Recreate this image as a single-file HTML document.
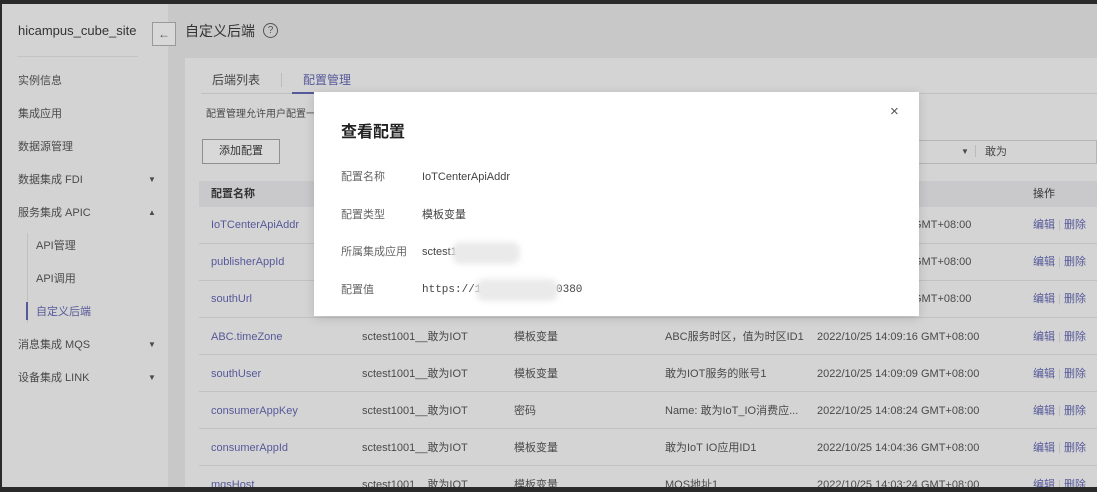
<!DOCTYPE html>
<html><head><meta charset="utf-8"><style>
*{margin:0;padding:0;box-sizing:border-box}
body{width:1097px;height:491px;overflow:hidden;background:#2a2a2a;font-family:"Liberation Sans","Noto Sans CJK SC",sans-serif;font-size:11px;line-height:14px;color:#4a4a4a;position:relative}
.abs{position:absolute;white-space:nowrap;line-height:14px}
#side{position:absolute;left:2px;top:4px;width:166px;height:483px;background:#d3d3d3}
#main{position:absolute;left:168px;top:4px;width:929px;height:483px;background:#c8c8c8}
#card{position:absolute;left:185px;top:58px;width:912px;height:429px;background:#d4d4d4}
.link{color:#56599a}
.row{position:absolute;left:199px;width:898px;border-bottom:1px solid #c2c2c2;height:37px}
#modal{position:absolute;left:314px;top:92px;width:605px;height:224px;background:#fff;box-shadow:0 2px 10px rgba(0,0,0,.15)}
.lbl{color:#666;font-size:11px}
.val{color:#444;font-size:11px}
.blur{position:absolute;background:#eaeaea;border-radius:8px;filter:blur(3px)}
</style></head><body>
<div id="side">
<div class="abs" style="left:16px;top:20px;font-size:13px;color:#333">hicampus_cube_site</div>
<div class="abs" style="left:15px;top:52px;width:121px;height:1px;background:#c4c4c4"></div>
<div class="abs" style="left:16px;top:70px">实例信息</div>
<div class="abs" style="left:16px;top:103px">集成应用</div>
<div class="abs" style="left:16px;top:136px">数据源管理</div>
<div class="abs" style="left:16px;top:169px">数据集成 FDI</div><div class="abs" style="left:146px;top:169px;font-size:8px">▼</div>
<div class="abs" style="left:16px;top:202px">服务集成 APIC</div><div class="abs" style="left:146px;top:202px;font-size:8px">▲</div>
<div class="abs" style="left:25px;top:229px;width:1px;height:90px;background:#c0c0c0"></div>
<div class="abs" style="left:34px;top:235px">API管理</div>
<div class="abs" style="left:34px;top:268px">API调用</div>
<div class="abs" style="left:24px;top:298px;width:2px;height:18px;background:#55599a"></div>
<div class="abs link" style="left:34px;top:301px">自定义后端</div>
<div class="abs" style="left:16px;top:334px">消息集成 MQS</div><div class="abs" style="left:146px;top:334px;font-size:8px">▼</div>
<div class="abs" style="left:16px;top:367px">设备集成 LINK</div><div class="abs" style="left:146px;top:367px;font-size:8px">▼</div>
</div>
<div id="main">
<div class="abs" style="left:-16px;top:18px;width:24px;height:24px;border:1px solid #999;background:#d8d8d8;text-align:center;line-height:22px;font-size:12px;color:#555">←</div>
<div class="abs" style="left:17px;top:19px;font-size:14px;line-height:16px;color:#333">自定义后端</div>
<div class="abs" style="left:95px;top:19px;width:15px;height:15px;border:1px solid #555;border-radius:50%;text-align:center;font-size:10px;line-height:13px;color:#555">?</div>
</div>
<div id="card">
<div class="abs" style="left:27px;top:15px;font-size:12px;color:#444">后端列表</div>
<div class="abs" style="left:96px;top:15px;width:1px;height:14px;background:#bbb"></div>
<div class="abs link" style="left:118px;top:15px;font-size:12px">配置管理</div>
<div class="abs" style="left:16px;top:35px;width:896px;height:1px;background:#c0c0c0"></div>
<div class="abs" style="left:107px;top:34px;width:60px;height:2px;background:#56599a"></div>
<div class="abs" style="left:21px;top:50px;font-size:10px">配置管理允许用户配置一</div>
<div class="abs" style="left:17px;top:81px;width:78px;height:25px;border:1px solid #8f8f8f;background:#d8d8d8;text-align:center;line-height:23px;color:#333">添加配置</div>
<div class="abs" style="left:700px;top:82px;width:212px;height:24px;border:1px solid #b5b5b5;background:#d4d4d4"></div>
<div class="abs" style="left:776px;top:87px;font-size:8px">▼</div>
<div class="abs" style="left:790px;top:87px;width:1px;height:12px;background:#bbb"></div>
<div class="abs" style="left:800px;top:87px">敢为</div>
</div>
<div class="row" style="top:181px;height:26px;background:#c9c9cc;border:none"></div>
<div class="abs" style="left:211px;top:187px;font-weight:bold;color:#333">配置名称</div>
<div class="abs" style="left:1033px;top:187px;color:#333">操作</div>
<div class="row" style="top:207px"></div><div class="row" style="top:244px"></div><div class="row" style="top:281px"></div>
<div class="row" style="top:318px"></div><div class="row" style="top:355px"></div><div class="row" style="top:392px"></div><div class="row" style="top:429px"></div>
<div class="abs link" style="left:211px;top:218px">IoTCenterApiAddr</div>
<div class="abs link" style="left:211px;top:255px">publisherAppId</div>
<div class="abs link" style="left:211px;top:292px">southUrl</div>
<div class="abs" style="left:913px;top:218px">GMT+08:00</div>
<div class="abs" style="left:913px;top:255px">GMT+08:00</div>
<div class="abs" style="left:913px;top:292px">GMT+08:00</div>
<div class="abs link" style="left:1033px;top:218px">编辑 <span style="color:#bbb">|</span> 删除</div>
<div class="abs link" style="left:1033px;top:255px">编辑 <span style="color:#bbb">|</span> 删除</div>
<div class="abs link" style="left:1033px;top:292px">编辑 <span style="color:#bbb">|</span> 删除</div>

<div class="abs link" style="left:211px;top:330px">ABC.timeZone</div><div class="abs" style="left:362px;top:330px">sctest1001__敢为IOT</div><div class="abs" style="left:514px;top:330px">模板变量</div><div class="abs" style="left:665px;top:330px">ABC服务时区，值为时区ID1</div><div class="abs" style="left:817px;top:330px">2022/10/25 14:09:16 GMT+08:00</div><div class="abs link" style="left:1033px;top:330px">编辑 <span style="color:#bbb">|</span> 删除</div>
<div class="abs link" style="left:211px;top:367px">southUser</div><div class="abs" style="left:362px;top:367px">sctest1001__敢为IOT</div><div class="abs" style="left:514px;top:367px">模板变量</div><div class="abs" style="left:665px;top:367px">敢为IOT服务的账号1</div><div class="abs" style="left:817px;top:367px">2022/10/25 14:09:09 GMT+08:00</div><div class="abs link" style="left:1033px;top:367px">编辑 <span style="color:#bbb">|</span> 删除</div>
<div class="abs link" style="left:211px;top:404px">consumerAppKey</div><div class="abs" style="left:362px;top:404px">sctest1001__敢为IOT</div><div class="abs" style="left:514px;top:404px">密码</div><div class="abs" style="left:665px;top:404px">Name: 敢为IoT_IO消费应...</div><div class="abs" style="left:817px;top:404px">2022/10/25 14:08:24 GMT+08:00</div><div class="abs link" style="left:1033px;top:404px">编辑 <span style="color:#bbb">|</span> 删除</div>
<div class="abs link" style="left:211px;top:441px">consumerAppId</div><div class="abs" style="left:362px;top:441px">sctest1001__敢为IOT</div><div class="abs" style="left:514px;top:441px">模板变量</div><div class="abs" style="left:665px;top:441px">敢为IoT IO应用ID1</div><div class="abs" style="left:817px;top:441px">2022/10/25 14:04:36 GMT+08:00</div><div class="abs link" style="left:1033px;top:441px">编辑 <span style="color:#bbb">|</span> 删除</div>
<div class="abs link" style="left:211px;top:478px">mqsHost</div><div class="abs" style="left:362px;top:478px">sctest1001__敢为IOT</div><div class="abs" style="left:514px;top:478px">模板变量</div><div class="abs" style="left:665px;top:478px">MQS地址1</div><div class="abs" style="left:817px;top:478px">2022/10/25 14:03:24 GMT+08:00</div><div class="abs link" style="left:1033px;top:478px">编辑 <span style="color:#bbb">|</span> 删除</div>
<div class="abs" style="left:0;top:487px;width:1097px;height:4px;background:#2a2a2a"></div>

<div id="modal">
<div class="abs" style="left:27px;top:32px;font-size:16px;line-height:18px;font-weight:bold;color:#222">查看配置</div>
<div class="abs" style="left:576px;top:12px;font-size:15px;line-height:16px;color:#555">×</div>
<div class="abs lbl" style="left:27px;top:78px">配置名称</div><div class="abs val" style="left:108px;top:78px">IoTCenterApiAddr</div>
<div class="abs lbl" style="left:27px;top:116px">配置类型</div><div class="abs val" style="left:108px;top:116px">模板变量</div>
<div class="abs lbl" style="left:27px;top:153px">所属集成应用</div><div class="abs val" style="left:108px;top:153px">sctest1</div>
<div class="blur" style="left:138px;top:150px;width:68px;height:22px"></div>
<div class="abs lbl" style="left:27px;top:191px">配置值</div><div class="abs val" style="left:108px;top:191px;font-family:'Liberation Mono',monospace">https://1</div>
<div class="abs val" style="left:242px;top:191px;font-family:'Liberation Mono',monospace">0380</div>
<div class="blur" style="left:162px;top:187px;width:82px;height:22px"></div>
</div>
</body></html>
